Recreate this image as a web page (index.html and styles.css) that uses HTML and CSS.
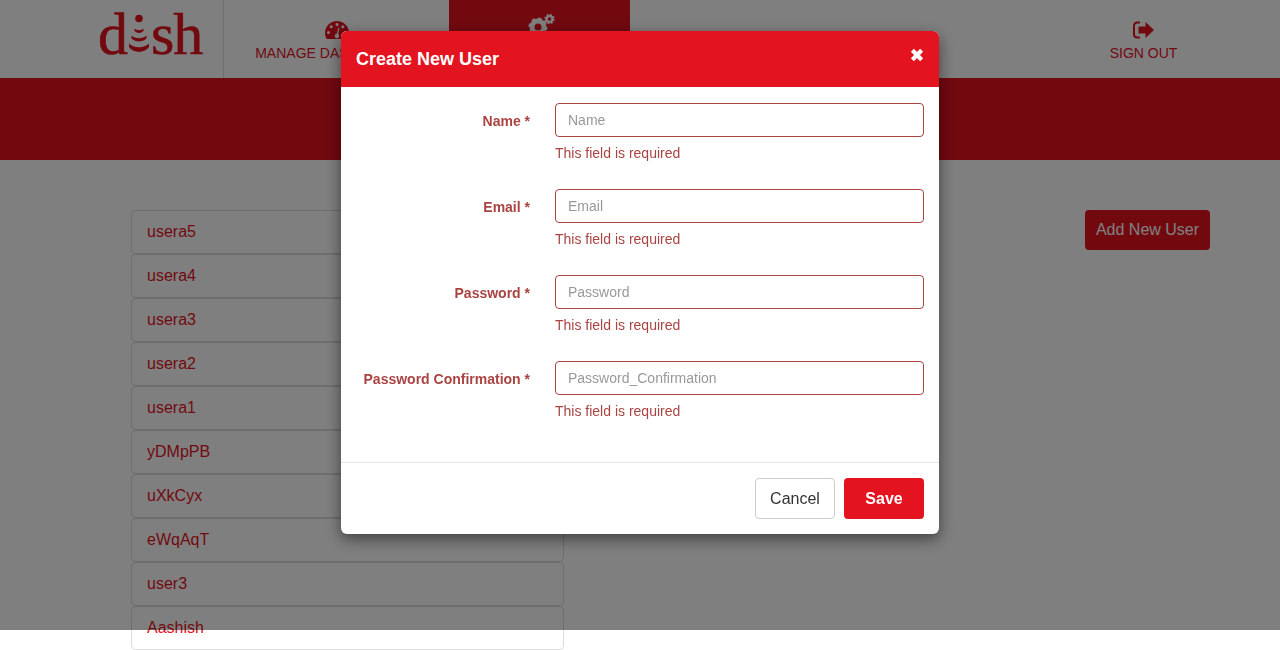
FILE: index.html
```html
<!DOCTYPE html>
<html lang="en">
  <head>
    <meta charset="UTF-8" />
    <title>Manage Users</title>
    <meta name="viewport" content="width=device-width, initial-scale=1.0" />
    <link rel="stylesheet" href="styles.css">
  </head>
  <body>
    <header class="topbar">
      <div class="logo">
        <span class="logo-text">d</span>
        <svg class="logo-i" viewBox="0 0 24 42" aria-hidden="true">
          <circle cx="12" cy="4.5" r="3.8" />
          <path d="M7.5 14.5c2.5 2 6.500 2 9 0v2.500c-2.500 2.500-6.500 2.500-9 0z" />
          <path d="M4.500 21.500c4 3.500 11 3.500 15 0v3c-4 4-11 4-15 0z" />
          <path d="M2 29.500c5 5 15 5 20 0v3.500c-5 6.500-15 6.500-20 0z" />
        </svg>
        <span class="logo-text">sh</span>
      </div>
      <nav class="nav">
        <a class="nav-item nav-dashboards" href="#">
          <svg class="nav-icon" viewBox="0 0 24 18" aria-hidden="true">
            <path fill-rule="evenodd" d="M12 0C5.400 0 0 5.400 0 12c0 2.200.6 4.200 1.600 6h20.800c1-1.800 1.600-3.800 1.600-6C24 5.400 18.600 0 12 0zM12 2a1.500 1.500 0 1 1 0 3 1.500 1.500 0 0 1 0-3zM6.200 4.200a1.500 1.500 0 1 1 0 3 1.500 1.500 0 0 1 0-3zM17.800 4.200a1.500 1.500 0 1 1 0 3 1.500 1.500 0 0 1 0-3zM3.500 10a1.500 1.500 0 1 1 0 3 1.500 1.500 0 0 1 0-3zM20.500 10a1.500 1.500 0 1 1 0 3 1.500 1.500 0 0 1 0-3zM13.500 6.500l1 .3-1.300 6.300c.7.500 1.100 1.200 1.100 2 0 1.300-1 2.300-2.300 2.300s-2.300-1-2.300-2.300c0-1.200.9-2.200 2.100-2.300z" />
          </svg>
          <span>MANAGE DASHBOARDS</span>
        </a>
        <a class="nav-item nav-users" href="#">
          <svg class="nav-icon nav-cogs" viewBox="0 0 28 20" aria-hidden="true">
            <circle class="cog-ring" cx="10" cy="13" r="6" />
            <circle class="cog-teeth" cx="10" cy="13" r="8" />
            <circle class="cog-ring cog-small" cx="21.500" cy="5" r="3" />
            <circle class="cog-teeth cog-small-teeth" cx="21.500" cy="5" r="4.300" />
          </svg>
          <span>MANAGE USERS</span>
        </a>
        <a class="nav-item nav-signout" href="#">
          <svg class="nav-icon" viewBox="0 0 21 18" aria-hidden="true">
            <path d="M7 1.500H4.500C2.500 1.500 1 3 1 5v8c0 2 1.500 3.500 3.500 3.500H7" fill="none" stroke="currentColor" stroke-width="2" />
            <path d="M12.500 1L21 9l-8.500 8v-4.500H5.500v-7h7z" />
          </svg>
          <span>SIGN OUT</span>
        </a>
      </nav>
    </header>

    <div class="band"></div>

    <main class="content">
      <ul class="user-list">
        <li>usera5</li>
        <li>usera4</li>
        <li>usera3</li>
        <li>usera2</li>
        <li>usera1</li>
        <li>yDMpPB</li>
        <li>uXkCyx</li>
        <li>eWqAqT</li>
        <li>user3</li>
        <li>Aashish</li>
      </ul>
      <button class="add-user" type="button">Add New User</button>
    </main>

    <div class="backdrop"></div>

    <div class="modal-wrap">
      <div class="modal">
        <div class="modal-header">
          <h4>Create New User</h4>
          <svg class="close-icon" viewBox="0 0 12 12" aria-hidden="true">
            <path d="M2 2l8 8M10 2l-8 8" />
          </svg>
        </div>
        <form class="modal-body">
          <div class="field">
            <label for="name">Name *</label>
            <div>
              <input id="name" type="text" placeholder="Name" />
              <p class="help">This field is required</p>
            </div>
          </div>
          <div class="field">
            <label for="email">Email *</label>
            <div>
              <input id="email" type="text" placeholder="Email" />
              <p class="help">This field is required</p>
            </div>
          </div>
          <div class="field">
            <label for="password">Password *</label>
            <div>
              <input id="password" type="password" placeholder="Password" />
              <p class="help">This field is required</p>
            </div>
          </div>
          <div class="field">
            <label for="confirm">Password Confirmation *</label>
            <div>
              <input id="confirm" type="password" placeholder="Password_Confirmation" />
              <p class="help">This field is required</p>
            </div>
          </div>
        </form>
        <div class="modal-footer">
          <button class="btn btn-cancel" type="button">Cancel</button>
          <button class="btn btn-save" type="button">Save</button>
        </div>
      </div>
    </div>
  </body>
</html>
```

FILE: styles.css
```css
* {
  box-sizing: border-box;
}

body {
  margin: 0;
  font-family: "Liberation Sans", Arial, sans-serif;
  font-size: 14px;
  background-color: #fff;
  color: #333;
}

.topbar {
  display: flex;
  height: 78px;
}

.logo {
  display: flex;
  align-items: flex-start;
  width: 224px;
  padding: 0 0 0 98px;
  border-right: 1px solid #ddd;
  color: #e3131f;
}

.logo-text {
  font-family: "Liberation Serif", serif;
  font-size: 60px;
  line-height: 69px;
  letter-spacing: -1px;
  -webkit-text-stroke: 0.6px #e3131f;
}

.logo-i {
  flex: none;
  width: 24px;
  height: 42px;
  margin-top: 14px;
  fill: #e3131f;
}

.nav {
  display: flex;
  flex: 1;
}

.nav-item {
  display: flex;
  flex-direction: column;
  align-items: center;
  padding-top: 21px;
  color: #e3131f;
  text-decoration: none;
  font-size: 14px;
}

.nav-item span {
  margin-top: 5px;
  line-height: 18px;
}

.nav-icon {
  display: block;
  height: 18px;
  fill: currentColor;
}

.nav-dashboards {
  width: 225px;
}

.nav-dashboards .nav-icon {
  width: 24px;
}

.nav-users {
  width: 181px;
  padding-top: 14px;
  background-color: #e3131f;
  color: #fff;
}

.nav-cogs {
  width: 28px;
  height: 20px;
  margin-left: 4px;
  fill: none;
  stroke: #fff;
}

.nav-users span {
  margin-top: 8px;
}

.cog-ring {
  stroke-width: 5px;
}

.cog-teeth {
  stroke-width: 3px;
  stroke-dasharray: 3 3.280;
}

.cog-small {
  stroke-width: 2.400px;
}

.cog-small-teeth {
  stroke-width: 1.800px;
  stroke-dasharray: 1.700 1.680;
}

.nav-signout {
  width: 181px;
  margin-left: auto;
  margin-right: 46px;
}

.nav-signout .nav-icon {
  width: 21px;
}

.band {
  height: 82px;
  background-color: #e3131f;
}

.content {
  display: flex;
  justify-content: space-between;
  align-items: flex-start;
  padding: 50px 70px 0 131px;
}

.user-list {
  width: 433px;
  margin: 0;
  padding: 0;
  list-style: none;
}

.user-list li {
  height: 44px;
  padding: 11px 15px;
  border: 1px solid #ddd;
  border-radius: 4px;
  font-size: 16px;
  line-height: 20px;
  color: #e3131f;
}

.add-user {
  width: 125px;
  height: 40px;
  border: none;
  border-radius: 4px;
  background-color: #e3131f;
  color: #fff;
  font-family: inherit;
  font-size: 16px;
}

.backdrop {
  position: fixed;
  top: 0;
  left: 0;
  right: 0;
  height: 630px;
  background-color: rgba(0, 0, 0, 0.5);
}

.modal-wrap {
  position: fixed;
  top: 31px;
  left: 0;
  right: 0;
  display: flex;
  justify-content: center;
}

.modal {
  width: 598px;
  border-radius: 6px;
  background-color: #fff;
  box-shadow: 0 5px 15px rgba(0, 0, 0, 0.5);
}

.modal-header {
  display: flex;
  align-items: center;
  justify-content: space-between;
  height: 56px;
  padding: 0 15px;
  border-radius: 6px 6px 0 0;
  background-color: #e3131f;
}

.modal-header h4 {
  margin: 0;
  font-size: 18px;
  font-weight: bold;
  color: #fff;
}

.close-icon {
  width: 14px;
  height: 14px;
  margin-bottom: 8px;
  fill: none;
  stroke: #fff;
  stroke-width: 3.600px;
}

.modal-body {
  display: flex;
  flex-direction: column;
  gap: 26px;
  height: 375px;
  padding: 16px 15px 0 0;
}

.field {
  display: grid;
  grid-template-columns: 189px 369px;
  column-gap: 25px;
}

.field label {
  padding-top: 8px;
  text-align: right;
  font-weight: bold;
  line-height: 20px;
  color: #a94442;
}

.field input {
  display: block;
  width: 100%;
  height: 34px;
  padding: 0 12px;
  border: 1px solid #a94442;
  border-radius: 4px;
  font-family: inherit;
  font-size: 14px;
}

.field input::placeholder {
  color: #999;
}

.help {
  margin: 6px 0 0;
  line-height: 20px;
  color: #a94442;
}

.modal-footer {
  display: flex;
  justify-content: flex-end;
  gap: 9px;
  padding: 15px;
  border-top: 1px solid #e5e5e5;
}

.btn {
  width: 80px;
  height: 41px;
  border-radius: 4px;
  font-family: inherit;
  font-size: 16px;
}

.btn-cancel {
  border: 1px solid #ccc;
  background-color: #fff;
  color: #333;
}

.btn-save {
  border: none;
  background-color: #e3131f;
  color: #fff;
  font-weight: bold;
}
```
